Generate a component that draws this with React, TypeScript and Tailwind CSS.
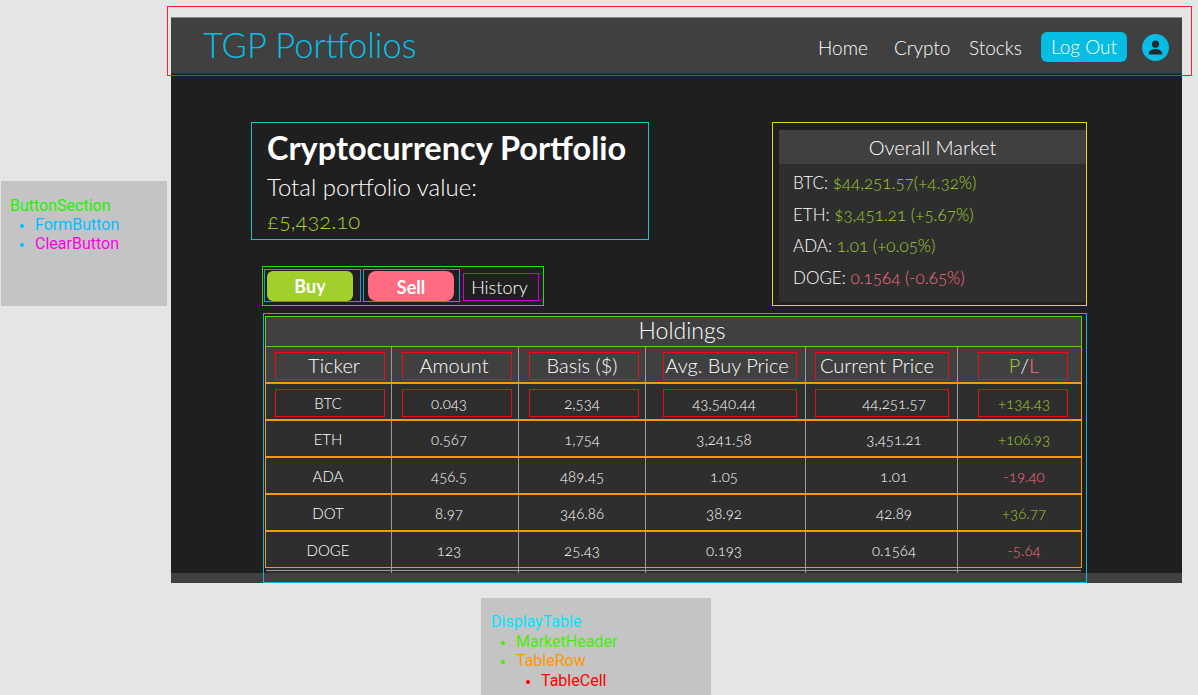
import React from 'react';

const GREEN = 'text-[#a0cf2e]';
const PINK = 'text-[#ff6b81]';

const TABLE_COLS = 'grid grid-cols-[126px_127px_127px_160px_152px_123px]';

const columns = [
  { label: 'Ticker', box: 'ml-[9px] w-[110px]', head: 'pl-[8px]', cell: 'pr-[4px]' },
  { label: 'Amount', box: 'ml-[10px] w-[110px]', head: 'pr-[6px]', cell: 'pr-[16px]' },
  { label: 'Basis ($)', box: 'ml-[10px] w-[110px]', head: 'pr-[4px]', cell: 'pr-[4px]' },
  { label: 'Avg. Buy Price', box: 'ml-[17px] w-[134px]', head: 'pr-[6px]', cell: 'pr-[12px]' },
  { label: 'Current Price', box: 'ml-[9px] w-[134px]', head: 'pr-[10px]', cell: 'pl-[24px]' },
  { label: 'P/L', box: 'ml-[20px] w-[90px]', head: 'pl-[2px]', cell: 'pl-[2px]' },
];

const rows = [
  { cells: ['BTC', '0.043', '2,534', '43,540.44', '44,251.57'], pl: '+134.43', up: true },
  { cells: ['ETH', '0.567', '1,754', '3,241.58', '3,451.21'], pl: '+106.93', up: true },
  { cells: ['ADA', '456.5', '489.45', '1.05', '1.01'], pl: '-19.40', up: false },
  { cells: ['DOT', '8.97', '346.86', '38.92', '42.89'], pl: '+36.77', up: true },
  { cells: ['DOGE', '123', '25.43', '0.193', '0.1564'], pl: '-5.64', up: false },
];

const market = [
  { name: 'BTC:', value: '$44,251.57(+4.32%)', color: GREEN },
  { name: 'ETH:', value: '$3,451.21 (+5.67%)', color: GREEN },
  { name: 'ADA:', value: '1.01 (+0.05%)', color: GREEN },
  { name: 'DOGE:', value: '0.1564 (-0.65%)', color: PINK },
];

function Navbar() {
  return (
    <header className="flex h-[57px] items-center justify-between border-t border-t-[#8a8a8a] border-b border-b-[#333] bg-[#404040] pl-[32px] pr-[13px]">
      <h1 className="text-[34.5px] font-light leading-none text-[#06c0e8]">TGP Portfolios</h1>
      <nav className="mt-[3px] flex items-center text-[19px] font-light text-white">
        <a className="mt-[2px] w-[76px]">Home</a>
        <a className="mt-[2px] w-[75px]">Crypto</a>
        <a className="mt-[2px] w-[72px]">Stocks</a>
        <button className="-mt-[1px] h-[30px] w-[86px] rounded-[6px] bg-[#05bde3] pt-[1px] text-[19px] font-light text-white">Log Out</button>
        <svg className="ml-[15px]" width="27" height="27" viewBox="0 0 27 27">
          <circle cx="13.5" cy="13.5" r="13.5" fill="#05bde3" />
          <circle cx="13.5" cy="10.2" r="3.6" fill="#1f2a30" />
          <path d="M6.8 19.6c0-3 3.6-4.6 6.7-4.6s6.7 1.6 6.7 4.6v.9H6.8z" fill="#1f2a30" />
        </svg>
      </nav>
    </header>
  );
}

function Cell({ index, boxed, bordered, textClass, children }: {
  index: number;
  boxed: boolean;
  bordered: boolean;
  textClass: string;
  children: React.ReactNode;
}) {
  return (
    <div className={`flex items-center ${index < 5 ? 'border-r border-[#9a9a9a]' : ''}`}>
      <div className={`flex h-[28px] items-center justify-center border ${columns[index].box} ${textClass} ${boxed ? 'mt-[3px]' : 'mt-[1px]'} ${bordered ? 'border-[#e81010]' : 'border-transparent'}`}>
        {children}
      </div>
    </div>
  );
}

function Spacer({ className }: { className: string }) {
  return (
    <div className={`${TABLE_COLS} ml-[1px] w-[815px] ${className}`}>
      {columns.slice(0, 5).map((col) => (
        <div key={col.label} className="border-r border-[#9a9a9a]" />
      ))}
    </div>
  );
}

function Holdings() {
  return (
    <section className="ml-[92px] mt-[7px] h-[270px] w-[824px] border border-[#1ab0e0] pl-[1px] pt-[2px] text-white">
      <div className="flex h-[31px] w-[817px] items-center justify-center border border-[#5fd010] bg-[#404040] pb-[2px] pl-[17px] text-[23px] font-light">Holdings</div>
      <div className={`${TABLE_COLS} h-[35px] w-[817px] border-x border-[#f59a10] bg-[#404040] text-[20px] font-light`}>
        {columns.map((col, i) => (
          <Cell key={col.label} index={i} boxed bordered textClass={`${col.head} pb-[3px]`}>
            {i === 5 ? (
              <>
                <span className="text-[#a0cf2e]">P</span>/<span className="text-[#ff6b81]">L</span>
              </>
            ) : (
              col.label
            )}
          </Cell>
        ))}
      </div>
      {rows.map((row, r) => (
        <div key={row.cells[0]} className={`${TABLE_COLS} h-[37px] w-[817px] border-x border-t-2 border-[#f59a10] bg-[#2e2e2e] text-[15px] font-light oldstyle-nums ${r === 4 ? 'h-[38px] border-b' : ''}`}>
          {row.cells.map((text, i) => (
            <Cell key={i} index={i} boxed={r === 0} bordered={r === 0} textClass={columns[i].cell}>
              {text}
            </Cell>
          ))}
          <Cell index={5} boxed={r === 0} bordered={r === 0} textClass={`${columns[5].cell} ${row.up ? GREEN : PINK}`}>
            {row.pl}
          </Cell>
        </div>
      ))}
      <Spacer className="h-[3px] border-b border-[#9a9a9a] bg-[#2e2e2e]" />
      <Spacer className="h-[2px] bg-[#2e2e2e]" />
    </section>
  );
}

export default function App() {
  return (
    <div className="relative h-[695px] w-[1198px] overflow-hidden bg-[#e5e5e5] pl-[171px] pt-[17px]">
      <div className="flex h-[566px] w-[1011px] flex-col font-['Lato','Open_Sans',sans-serif]">
        <Navbar />
        <main className="h-[509px] bg-[linear-gradient(#1f1f1f_499px,#404040_499px)]">
          <div className="flex items-start justify-between pr-[95px] pt-[48px]">
            <div className="pl-[80px]">
              <div className="h-[118px] w-[398px] border border-[#10c8c8] pl-[15px] pt-[7px]">
                <h2 className="text-[32.5px] font-bold leading-[36px] text-white">Cryptocurrency Portfolio</h2>
                <p className="mt-[7px] text-[24px] font-light leading-[28px] text-white">Total portfolio value:</p>
                <p className="mt-[6px] text-[22px] font-light leading-[28px] text-[#a8d430] oldstyle-nums">£5,432.10</p>
              </div>
              <div className="ml-[11px] mt-[26px] flex h-[40px] w-[282px] border border-[#22dd10] pl-[1px] pt-[2px]">
                <div className="h-[33px] w-[97px] border border-[#1a9fd0] pl-[2px] pt-px">
                  <button className="h-[30px] w-[86px] rounded-[6px] bg-[#a0cf2e] text-[18px] font-bold text-white">Buy</button>
                </div>
                <div className="ml-[2px] h-[33px] w-[97px] border border-[#1a9fd0] pl-[4px] pt-px">
                  <button className="h-[30px] w-[86px] rounded-[8px] bg-[#ff6b81] pt-[2px] text-[18px] font-bold text-white">Sell</button>
                </div>
                <button className="ml-[3px] mt-[4px] h-[28px] w-[76px] border border-[#d000d0] pb-[2px] pr-[3px] text-[18px] font-light text-white">History</button>
              </div>
            </div>
            <div className="h-[184px] w-[315px] border border-[#e0d800] pl-[6px] pt-[7px]">
              <aside className="h-[172px] w-[307px] bg-[#2e2e2e]">
                <div className="flex h-[34px] items-center justify-center bg-[#404040] text-[20px] font-light text-white">Overall Market</div>
                <ul className="pl-[14px] pt-[3px] text-[17px] font-light text-white oldstyle-nums">
                  {market.map((m) => (
                    <li key={m.name} className="h-[31.7px] leading-[31.7px]">
                      {m.name} <span className={m.color}>{m.value}</span>
                    </li>
                  ))}
                </ul>
              </aside>
            </div>
          </div>
          <Holdings />
        </main>
      </div>

      {/* navbar component outline, wider than the mock-up frame */}
      <div className="absolute left-[167px] top-[6px] h-[70px] w-[1025px] border border-[#ff2020]" />

      {/* ButtonSection note */}
      <div className="absolute left-[1px] top-[181px] h-[125px] w-[166px] bg-[#c4c4c4] pl-[9px] pt-[15px] font-['Roboto',sans-serif] text-[16px] leading-[19px]">
        <p className="text-[#22f000]">ButtonSection</p>
        <ul className="list-disc pl-[25px] text-[#00bfff] marker:text-[#00bfff] marker:text-[13px]">
          <li>FormButton</li>
          <li className="text-[#ff00e6]">ClearButton</li>
        </ul>
      </div>

      {/* DisplayTable note */}
      <div className="absolute left-[481px] top-[598px] h-[97px] w-[230px] bg-[#c4c4c4] pl-[10px] pt-[14px] font-['Roboto',sans-serif] text-[16px] leading-[19.5px]">
        <p className="text-[#00e5ff]">DisplayTable</p>
        <ul className="list-disc pl-[25px] text-[#44f000] marker:text-[#44f000] marker:text-[13px]">
          <li>MarketHeader</li>
          <li className="text-[#ff9800]">
            TableRow
            <ul className="list-disc pl-[25px] text-[#ff0000] marker:text-[#ff0000] marker:text-[13px]">
              <li>TableCell</li>
            </ul>
          </li>
        </ul>
      </div>
    </div>
  );
}
